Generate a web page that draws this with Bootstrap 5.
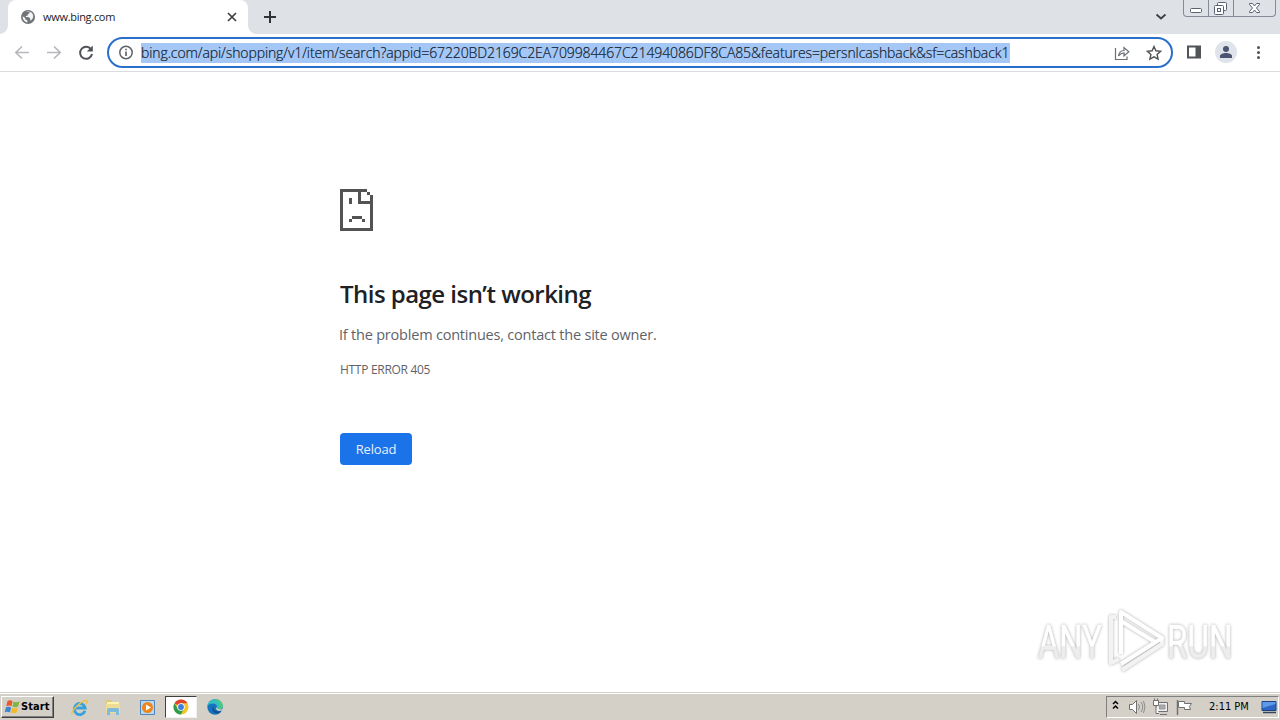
<!DOCTYPE html>
<html lang="en">
<head>
<meta charset="utf-8">
<meta name="viewport" content="width=device-width, initial-scale=1">
<title>www.bing.com</title>
<link href="https://cdn.jsdelivr.net/npm/bootstrap@5.3.0/dist/css/bootstrap.min.css" rel="stylesheet">
<style>
body{font-family:"Open Sans","Noto Sans",sans-serif;color:#202124}
svg{display:block;flex:none}
.strip{height:34px;background:#dee1e6;flex:none}
.tab{width:240px;height:34px;margin-left:8px;background:#fff;border-radius:8px 8px 0 0;padding:0 10px 0 13px}
.tab::before,.tab::after{content:"";position:absolute;bottom:0;width:8px;height:8px}
.tab::before{left:-8px;background:radial-gradient(circle at 0 0,transparent 7.5px,#fff 8px)}
.tab::after{right:-8px;background:radial-gradient(circle at 100% 0,transparent 7.5px,#fff 8px)}
.tab-title{font-size:11px;margin-left:8px;letter-spacing:-.3px;line-height:16px}
.wbtns{width:93px;height:17px;border:1px solid #858a96;border-top:0;border-radius:0 0 4px 4px;margin-right:4px}
.tool{height:38px;border-bottom:1px solid #dadce0;flex:none;padding:3px 12px 0 14px}
.omni{width:1066px;height:31px;border:2px solid #2a6fcb;border-radius:16px;margin-left:13px;padding:0 9px 0 10px;flex:none}
.url{font-weight:300;font-size:14px;line-height:20px;height:20px;background:#a4c7f5;color:#101c30;margin-left:7px;white-space:nowrap;width:869px;letter-spacing:-.102px;-webkit-text-stroke:.2px #101c30}
.err{margin-left:340px;padding-top:117px}
.err h1{font-size:24px;font-weight:600;line-height:30px;margin:48px 0 0;white-space:nowrap;letter-spacing:-.53px}
.err .msg{font-size:14.5px;line-height:22px;color:#5f6368;margin:15px 0 0 -1px;white-space:nowrap;letter-spacing:-.21px}
.err .code{font-size:12px;line-height:18px;color:#5f6368;margin:15px 0 0;white-space:nowrap;letter-spacing:-.3px}
.reload{width:72px;height:32px;margin-top:54px;background:#1a73e8;border:0;border-radius:4px;font-size:13px;color:#e8f0fe;padding:0;line-height:32px;letter-spacing:-.15px}
.wm{right:40px;bottom:16px;filter:drop-shadow(0 0 1.5px #aaa)}
.taskbar{height:28px;background:#d4d0c8;border-top:1px solid #d4d0c8;box-shadow:inset 0 1px #fff;flex:none;padding:3px 1px 1px 1px}
.start{width:53px;height:22px;border:1px solid;border-color:#fff #404040 #404040 #fff;box-shadow:inset -1px -1px #808080;font:700 11px/20px "DejaVu Sans Condensed","DejaVu Sans",sans-serif;color:#000;padding-left:2px;letter-spacing:.1px}
.cell{width:34px;height:22px}
.cell.on{width:32px;background:#fff;border:1px solid;border-color:#404040 #f4f2ee #f4f2ee #404040;margin:0 1px}
.tray{width:173px;height:22px;border:1px solid;border-color:#808080 #fff #fff #808080;padding-left:5px}
.clock{font:11px/20px "DejaVu Sans Condensed","DejaVu Sans",sans-serif;color:#000;white-space:nowrap;margin-left:11px}
</style>
</head>
<body class="vh-100 d-flex flex-column overflow-hidden bg-white">
<header class="strip d-flex align-items-start">
  <div class="tab position-relative d-flex align-items-center">
    <svg width="14" height="14" viewBox="0 0 14 14"><circle cx="7" cy="7" r="7" fill="#707378"/><path d="M1.600 6.200 4.200 8v1.200l2.200 1.300v2C3.500 12 1.600 9.800 1.600 6.200zM5 2.100c2-.8 3.400-.5 3.400-.5l.3 1.400-1.900 1.300v1.200L5 6l-.4 1 3.300.3 1.500 1.500-.5 1.800 1.600-.6C13.200 7.500 12.500 3.500 9.700 2" fill="#fff" opacity=".92"/></svg>
    <span class="tab-title">www.bing.com</span>
    <svg class="ms-auto" width="12" height="12" viewBox="0 0 12 12"><path d="m2 2 8 8m0-8-8 8" stroke="#3c4043" stroke-width="1.700"/></svg>
  </div>
  <svg class="ms-3" width="12" height="34" viewBox="0 0 12 34"><path d="M6 11v12M0 17h12" stroke="#303238" stroke-width="2"/></svg>
  <svg class="ms-auto me-3" width="12" height="34" viewBox="0 0 12 34"><path d="m1.500 14.500 4.500 4 4.500-4" fill="none" stroke="#3c4043" stroke-width="1.800"/></svg>
  <div class="wbtns d-flex">
    <svg width="91" height="16" viewBox="0 0 91 16" fill="none" stroke="#5c6170"><path d="M24.500 0v16M49.500 0v16" stroke="#858a96"/><rect x="6.500" y="8.500" width="11" height="4" rx="1" fill="#fff"/><rect x="33.500" y="2.500" width="9" height="8" rx="1" fill="#fff"/><rect x="30.500" y="5.500" width="9" height="9" rx="1" fill="#fff"/><rect x="33.500" y="8.500" width="3" height="3"/><path d="M65.500 3.500h3l2 2.500 2-2.500h3v1L72.500 8l3 3.500v1h-3l-2-2.500-2 2.500h-3v-1l3-3.500-3-3.500z" fill="#fff"/></svg>
  </div>
</header>
<nav class="tool d-flex align-items-start">
  <svg width="80" height="31" viewBox="0 0 80 31" fill="none"><path d="M15 15.500H2m6-6-6.200 6 6.200 6M33 15.500h13m-6-6 6.200 6-6.200 6" stroke="#b6b8bb" stroke-width="1.700"/><path d="M77.300 12.800A6 6 0 1 0 78 17" stroke="#505357" stroke-width="2"/><path d="M78.800 8.500v6h-6z" fill="#505357"/></svg>
  <div class="omni d-flex align-items-center">
    <svg width="15" height="15" viewBox="0 0 15 15"><circle cx="7" cy="7.500" r="6.200" fill="none" stroke="#5f6368" stroke-width="1.500"/><path d="M7 6.500V11M7 3.700v1.600" stroke="#505357" stroke-width="1.500"/></svg>
    <div class="url">bing.com/api/shopping/v1/item/search?appid=67220BD2169C2EA709984467C21494086DF8CA85&amp;features=persnlcashback&amp;sf=cashback1</div>
    <svg class="ms-auto" width="16" height="16" viewBox="0 0 16 16" fill="none" stroke="#6b6e73" stroke-width="1.200"><path d="M1.500 3v11.500h11.500v-3M4.500 11C5 7.500 7 5.500 10 5.500v-3l4.800 4.200-4.800 4.200v-3C7.500 8 6 9 4.500 11z"/></svg>
    <svg class="ms-3" width="16" height="16" viewBox="0 0 16 16"><path d="m8 1.500 1.900 4.300 4.700.5-3.500 3.200 1 4.700L8 11.800l-4.100 2.400 1-4.700-3.500-3.200 4.700-.5z" fill="none" stroke="#505357" stroke-width="1.400"/></svg>
  </div>
  <svg width="94" height="31" viewBox="0 0 94 31"><path d="M15 9.500h12v11H15z" fill="none" stroke="#505357" stroke-width="2"/><path d="M22.500 9H28v12h-5.500z" fill="#505357"/><circle cx="53" cy="15" r="11" fill="#dfe3ea"/><circle cx="53" cy="12" r="3" fill="#4b5470"/><path d="M47 21v-2c0-2 3.500-3 6-3s6 1 6 3v2z" fill="#4b5470"/><g fill="#505357"><circle cx="85.500" cy="10.500" r="1.500"/><circle cx="85.500" cy="15.500" r="1.500"/><circle cx="85.500" cy="20.500" r="1.500"/></g></svg>
</nav>
<main class="flex-grow-1 position-relative">
  <div class="err">
    <svg width="33" height="42" viewBox="0 0 33 42" fill="#535353" shape-rendering="crispEdges"><path d="M0 0h27v3H3v36h27V15H18V3h3v9h9V6h3v36H0zM27 3h3v3h-3zM9 9h3v6H9zM12 27h10v3H12zM9 30h3v3H9zM22 30h3v3h-3z"/></svg>
    <h1>This page isn’t working</h1>
    <p class="msg">If the problem continues, contact the site owner.</p>
    <p class="code">HTTP ERROR 405</p>
    <button class="btn reload d-block" type="button">Reload</button>
  </div>
  <svg class="wm position-absolute" width="204" height="70" viewBox="0 0 204 70">
    <defs><linearGradient id="g" x1="0" y1="0" x2="0" y2="1"><stop offset=".56" stop-color="#fff"/><stop offset=".58" stop-color="#ededed"/></linearGradient></defs>
    <g font-family="Roboto,sans-serif" font-size="46" fill="url(#g)" stroke="url(#g)" stroke-width=".6"><text transform="translate(2 52) scale(.71 1)">ANY</text><text transform="translate(131 52) scale(.72 1)">RUN</text></g>
    <g fill="none" stroke="#fff" stroke-width="4" stroke-linejoin="round"><path d="M80 11h-5v46l8-4M86 64l40-26v-6" stroke="#f3f3f3"/><path d="M85 48V6l41 26-41 26"/><path d="M85 15 119 36"/></g>
  </svg>
</main>
<footer class="taskbar d-flex align-items-start">
  <div class="start d-flex align-items-center">
    <svg width="17" height="16" viewBox="0 0 16 16"><path d="M3 2q3-1.500 5 .2L7 7.300Q5 6 1.700 7.200z" fill="#e8592b"/><path d="M9 2.500q3 1.500 6-.2l-1.300 5Q11 9 8 7.500z" fill="#7fb540"/><path d="M1.500 8.200q3-1.200 5.200.2l-1.300 5Q3 12 .2 13.200z" fill="#3c86d0"/><path d="M7.700 8.700q3 1.500 5.800-.1l-1.300 5q-3 1.500-5.800 0z" fill="#f3bb2c"/></svg>
    <span>Start</span>
  </div>
  <div class="cell ms-2 d-flex align-items-center justify-content-center"><svg width="17" height="17" viewBox="0 0 17 17" fill="none"><path d="M14 11.800A5.500 5.500 0 1 1 14.200 9H5" stroke="#38a1dc" stroke-width="2.800"/><path d="M1 15.500C-.5 12 11 1 15.500 1.500 17 2 16 4 15 5" stroke="#ecc04a" stroke-width="1.400"/></svg></div>
  <div class="cell d-flex align-items-center justify-content-center"><svg width="18" height="18" viewBox="0 0 18 18"><path d="M2 2h5l1 2h7v10H2z" fill="#dfc87c"/><path d="M3 4h12v3H3z" fill="#fff3b0"/><path d="M2 6h14v9H2z" fill="#efdc94"/><path d="M3 17v-5q0-2 2-2h8q2 0 2 2v5h-3v-3H6v3z" fill="#7dbbdd"/></svg></div>
  <div class="cell d-flex align-items-center justify-content-center"><svg width="17" height="17" viewBox="0 0 17 17"><path d="M1.500 1.500h14v14h-14z" fill="#b9d8ef" stroke="#4c87bd"/><circle cx="8.500" cy="8.500" r="5.500" fill="#f08519"/><path d="m7 5.500 5 3-5 3z" fill="#fff"/></svg></div>
  <div class="cell on d-flex align-items-center justify-content-center"><svg width="16" height="16" viewBox="0 0 16 16"><circle cx="8" cy="8" r="7.500" fill="#f7c52b"/><path d="M8 8 1.500 4.200A7.500 7.500 0 0 1 14.500 4.200H8z" fill="#df4334"/><path d="M1.500 4.200A7.500 7.500 0 0 0 7.800 15.500L11 9.800 8 8 4.700 9.800z" fill="#2d9d4d"/><circle cx="8" cy="8" r="3.700" fill="#fff"/><circle cx="8" cy="8" r="2.900" fill="#3e7de0"/></svg></div>
  <div class="cell d-flex align-items-center justify-content-center"><svg width="16" height="16" viewBox="0 0 16 16"><circle cx="8" cy="8" r="7.700" fill="#1673bd"/><path d="M.4 7C1 2.500 4.500.3 8 .3c5 0 8 3.500 7.700 7C15.500 10 12 11 10 10c-1-.5 0-1 0-2.500C10 4 3 3 .4 7z" fill="#36bfc0"/><path d="M8 .3c5 0 8 3.500 7.700 7C15.500 10 12 11 10 10c4-1 4-6-2-9.700z" fill="#50c878"/><path d="M6.500 7c-1.500 4 3.500 7 8 4.500l-2 2.500C8 16 3 11 6.500 7z" fill="#105090"/><path d="M9.800 8c0 2 2.500 3 6 1.800l-1 1.700C10 13 8 10 9.800 8z" fill="#d4d0c8"/></svg></div>
  <div class="tray ms-auto d-flex align-items-center">
    <svg width="86" height="20" viewBox="0 0 86 20" fill="none"><path d="M1 7 3.500 4.500 6 7m-5 4.500L3.500 9 6 11.500" stroke="#000" stroke-width="1.500"/><g stroke="#707070"><path d="M17.500 7.500h3l4-4v13l-4-4h-3z" fill="#fff"/><path d="M26.500 7q2 3 0 6M29 5q3.500 5 0 10M31.500 4q3 6 0 12" stroke="#8a8a8a"/><path d="M44.500 5.500h11v9h-11zM48 17.500h7" fill="#eee"/><path d="M47.500 8h5.500v4h-5.500z" fill="#aaa" stroke="#999"/><path d="M41.500 3.500h5v5h-5zM44 8.500v8h3M42.500 1.500v2M45.500 1.500v2" fill="#fff"/><path d="M65.500 3v15" stroke-width="1.500"/><path d="M66.500 4.500h6v2h7l-2 3 1 3h-6v-2h-6z" fill="#fff"/></g></svg>
    <span class="clock">2:11 PM</span>
    <svg class="ms-auto" width="17" height="18" viewBox="1 0 17 18"><path d="M2 3.500h14v9H2z" fill="#2d66c5" stroke="#1b4285"/><path d="M2.500 4h13v2L2.500 10z" fill="#5e9ae8"/><path d="M3 14.500h13" stroke="#34465e" stroke-width="1.500"/></svg>
  </div>
</footer>
<script src="https://cdn.jsdelivr.net/npm/bootstrap@5.3.0/dist/js/bootstrap.bundle.min.js"></script>
</body>
</html>
